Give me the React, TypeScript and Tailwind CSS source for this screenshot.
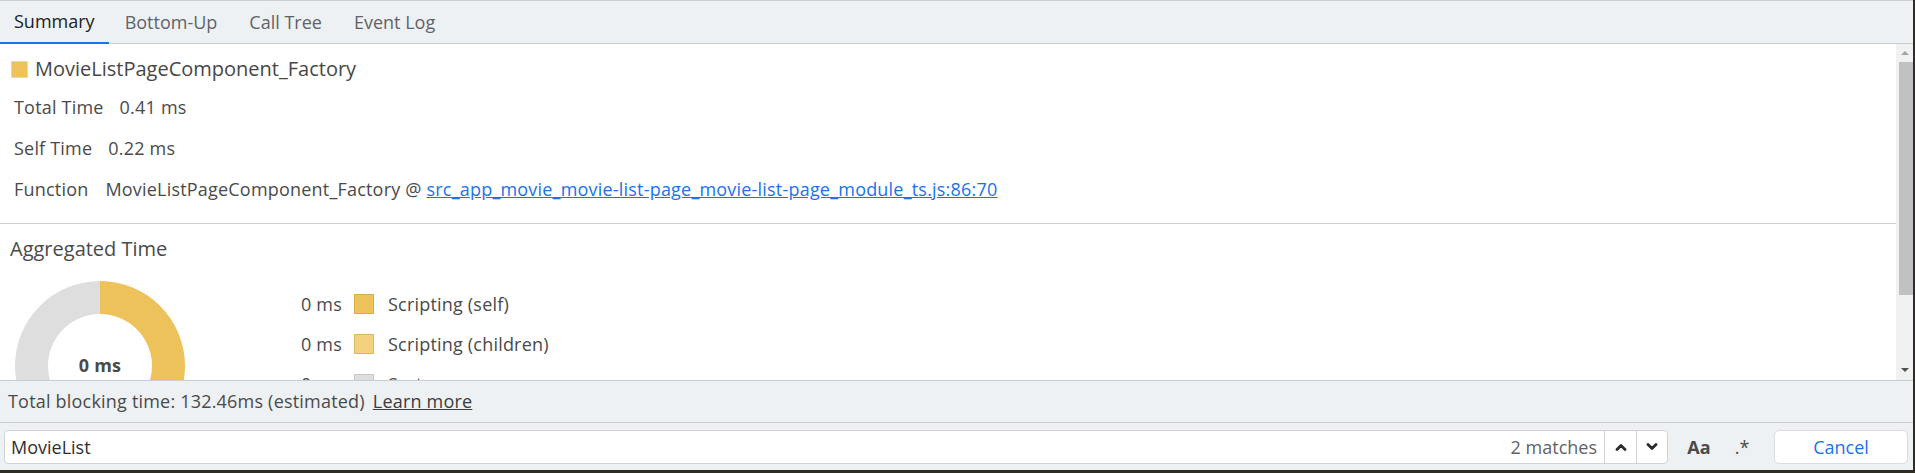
import React from 'react';

const tabs = ['Summary', 'Bottom-Up', 'Call Tree', 'Event Log'];

const legend = [
  { value: '0 ms', label: 'Scripting (self)', swatch: 'bg-[#eec25a] border-[#d9ad48]' },
  { value: '0 ms', label: 'Scripting (children)', swatch: 'bg-[#f3d27f] border-[#dcb862]' },
  { value: '0 ms', label: 'System', swatch: 'bg-[#dedede] border-[#c8c8c8]' },
];

const Donut: React.FC = () => (
  <svg width="172" height="172" viewBox="0 0 172 172" className="shrink-0">
    {/* left half grey, right half yellow */}
    <path d="M86 1 A85 85 0 0 0 86 171 L86 138 A52 52 0 0 1 86 34 Z" fill="#dedede" />
    <path d="M86 1 A85 85 0 0 1 86 171 L86 138 A52 52 0 0 0 86 34 Z" fill="#eec25a" />
    <text x="86" y="92" textAnchor="middle" fontSize="18" fontWeight="700" fill="#4a4a4a" fontFamily="'Open Sans', sans-serif">
      0 ms
    </text>
  </svg>
);

const Chevron: React.FC<{ up?: boolean }> = ({ up }) => (
  <svg width="12" height="8" viewBox="0 0 12 8">
    <polyline
      points={up ? '2,6.5 6,2.5 10,6.5' : '2,1.5 6,5.5 10,1.5'}
      fill="none"
      stroke="#2b2b2b"
      strokeWidth="2.8"
      strokeLinecap="round"
      strokeLinejoin="round"
    />
  </svg>
);

const App: React.FC = () => {
  return (
    <div className="w-[1915px] h-[473px] bg-[#2f2d20] font-['Open_Sans',sans-serif] text-[18px] text-[#4a4a4a] overflow-hidden">
      <div className="w-[1913px] h-[470px] flex flex-col bg-white">
        {/* tabs */}
        <div className="h-[44px] shrink-0 flex bg-[#eef1f3] border-t border-b border-[#cbcdd1]">
          {tabs.map((t, i) => (
            <div
              key={t}
              className={
                i === 0
                  ? 'px-[14px] flex items-center text-[#202124] border-b-2 border-[#1a73e8] -mb-px'
                  : 'px-[16px] flex items-center text-[#5f6368]'
              }
            >
              {t}
            </div>
          ))}
        </div>

        {/* content + scrollbar */}
        <div className="flex h-[336px] shrink-0 overflow-hidden">
          <div className="flex-1 overflow-hidden tracking-[0.2px]">
            <div className="pl-[11px]">
              <div className="flex items-center h-[20px] mt-[15px] text-[20px] tracking-normal text-[#474747]">
                <span className="w-[17px] h-[17px] bg-[#eec25a] border border-[#d8d8d8] mr-[7px]" />
                MovieListPageComponent_Factory
              </div>
              <div className="mt-[8px] pl-[3px]">
                <div className="h-[41px] flex items-center">
                  <span className="mr-[16px]">Total Time</span>
                  <span>0.41 ms</span>
                </div>
                <div className="h-[41px] flex items-center">
                  <span className="mr-[16px]">Self Time</span>
                  <span>0.22 ms</span>
                </div>
                <div className="h-[41px] flex items-center">
                  <span className="mr-[17px]">Function</span>
                  <span>
                    MovieListPageComponent_Factory @{' '}
                    <a className="text-[#1a73e8] underline">src_app_movie_movie-list-page_movie-list-page_module_ts.js:86:70</a>
                  </span>
                </div>
              </div>
            </div>
            <div className="mt-[13px] border-t border-[#d0d0d0]">
              <div className="pl-[10px] h-[20px] mt-[15px] flex items-center text-[20px] tracking-normal">Aggregated Time</div>
              <div className="flex mt-[21px] pl-[14px]">
                <Donut />
                <div className="ml-[106px] pt-[4px]">
                  {legend.map((l, i) => (
                    <div key={i} className="h-[40px] flex items-center">
                      <span className="w-[50px] text-right">{l.value}</span>
                      <span className={`w-[20px] h-[20px] border ml-[12px] ${l.swatch}`} />
                      <span className="ml-[14px]">{l.label}</span>
                    </div>
                  ))}
                </div>
              </div>
            </div>
          </div>
          {/* scrollbar */}
          <div className="w-[17px] shrink-0 bg-[#f1f1f1] flex flex-col items-center">
            <div className="h-[18px] flex items-center justify-center">
              <div className="w-0 h-0 border-l-[4px] border-r-[4px] border-b-[4px] border-l-transparent border-r-transparent border-b-[#a3a3a3]" />
            </div>
            <div className="w-[14px] h-[233px] ml-[2px] bg-[#c1c1c1]" />
            <div className="flex-1 flex items-end justify-center pb-[8px]">
              <div className="w-0 h-0 border-l-[4px] border-r-[4px] border-t-[4px] border-l-transparent border-r-transparent border-t-[#505050]" />
            </div>
          </div>
        </div>

        {/* footer */}
        <div className="h-[43px] shrink-0 flex items-center bg-[#eef1f3] border-t border-b border-[#cbcdd1] pl-[8px] tracking-[0.2px]">
          <span>Total blocking time: 132.46ms (estimated)</span>
          <a className="ml-[8px] underline text-[#3c3c3c]">Learn more</a>
        </div>

        {/* search */}
        <div className="flex-1 bg-[#eef1f3] flex items-start pt-[7px] pl-[4px]">
          <div className="w-[1664px] h-[34px] flex items-center bg-white border border-[#d0d2d6] rounded-[4px]">
            <span className="flex-1 pl-[6px] text-[#303030]">MovieList</span>
            <span className="pr-[7px] text-[#5f6368]">2 matches</span>
            <div className="w-[32px] h-full flex items-center justify-center border-l border-[#d0d2d6]">
              <Chevron up />
            </div>
            <div className="w-[31px] h-full flex items-center justify-center border-l border-[#d0d2d6]">
              <Chevron />
            </div>
          </div>
          <div className="w-[62px] h-[34px] flex items-center justify-center font-bold text-[#4a4a4a]">Aa</div>
          <div className="w-[24px] h-[34px] flex items-center justify-center text-[#4a4a4a]">.*</div>
          <div className="ml-[20px] w-[134px] h-[34px] flex items-center justify-center bg-white border border-[#dadce0] rounded-[5px] text-[#1a73e8]">
            Cancel
          </div>
        </div>
      </div>
    </div>
  );
};

export default App;
